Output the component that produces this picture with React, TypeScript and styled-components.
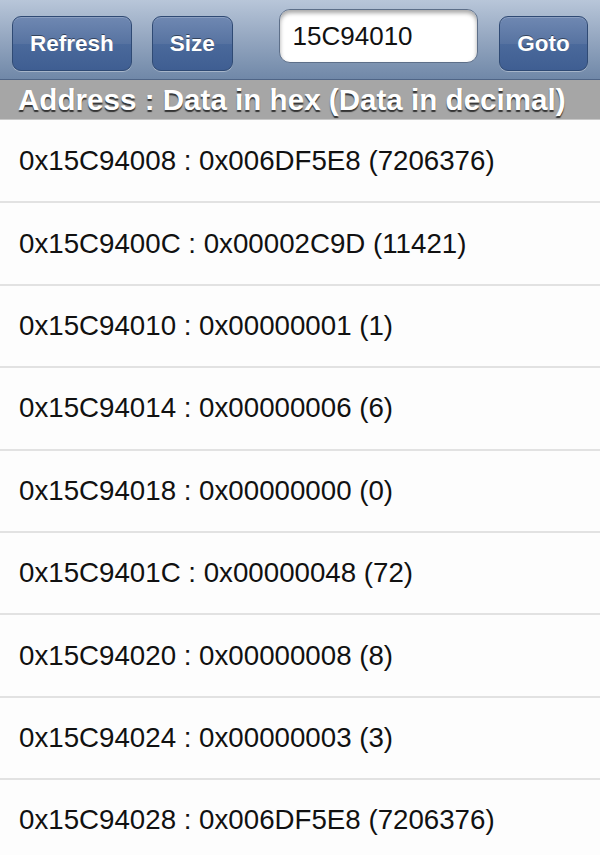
import React from "react";
import styled, { createGlobalStyle } from "styled-components";

const Global = createGlobalStyle`
  html, body { margin: 0; padding: 0; background: #fdfdfd; }
  body { font-family: "Liberation Sans", Arial, sans-serif; }
`;

const Page = styled.div`
  width: 600px;
  height: 855px;
  overflow: hidden;
  background: #fdfdfd;
  display: flex;
  flex-direction: column;
  & > * { flex-shrink: 0; }
`;

const Toolbar = styled.div`
  height: 80px;
  box-sizing: border-box;
  display: flex;
  align-items: flex-start;
  padding: 0 12px 0 12px;
  background: linear-gradient(#b8c6d9 0%, #97a9c2 45%, #7088a8 100%);
  border-bottom: 1px solid #4f6586;
`;

const Button = styled.button<{ $w: number; $ml: number }>`
  width: ${(p) => p.$w}px;
  margin-left: ${(p) => p.$ml}px;
  margin-top: 16px;
  height: 55px;
  border-radius: 9px;
  border: 1px solid #2f4a74;
  background: linear-gradient(#6f88b2 0%, #5773a1 50%, #4a699b 52%, #3f5e92 100%);
  box-shadow: inset 0 1px 0 rgba(255, 255, 255, 0.2), 0 1px 0 rgba(255, 255, 255, 0.35);
  color: #fff;
  font-family: "Liberation Sans", Arial, sans-serif;
  font-weight: bold;
  font-size: 22.5px;
  text-shadow: 0 -1px 0 rgba(0, 0, 0, 0.45);
  padding: 0;
  display: flex;
  align-items: center;
  justify-content: center;
`;

const Field = styled.div`
  width: 200px;
  height: 54px;
  margin-left: 46px;
  margin-top: 9px;
  box-sizing: border-box;
  border-radius: 11px;
  background: #fff;
  border: 1px solid #5d6f89;
  box-shadow: inset 0 3px 4px rgba(0, 0, 0, 0.35);
  display: flex;
  align-items: center;
  padding-left: 13px;
  font-size: 26px;
  color: #111;
`;

const Header = styled.div`
  height: 40px;
  box-sizing: border-box;
  background: #a6a6a6;
  display: flex;
  align-items: center;
  padding-left: 18px;
  font-weight: bold;
  font-size: 29.6px;
  color: #fff;
  white-space: nowrap;
  text-shadow: 0 2px 1px rgba(40, 40, 40, 0.9);
  border-bottom: 1px solid #c8c8c8;
`;

const List = styled.div`
  display: flex;
  flex-direction: column;
  padding-top: 1px;
`;

const Row = styled.div`
  height: 82.4px;
  flex-shrink: 0;
  box-sizing: border-box;
  border-bottom: 2px solid #e2e2e2;
  display: flex;
  align-items: center;
  padding-left: 19px;
  font-size: 27.7px;
  color: #111;
  white-space: nowrap;
`;

const rows = [
  "0x15C94008 : 0x006DF5E8 (7206376)",
  "0x15C9400C : 0x00002C9D (11421)",
  "0x15C94010 : 0x00000001 (1)",
  "0x15C94014 : 0x00000006 (6)",
  "0x15C94018 : 0x00000000 (0)",
  "0x15C9401C : 0x00000048 (72)",
  "0x15C94020 : 0x00000008 (8)",
  "0x15C94024 : 0x00000003 (3)",
  "0x15C94028 : 0x006DF5E8 (7206376)",
];

export default function App() {
  return (
    <Page>
      <Global />
      <Toolbar>
        <Button $w={120} $ml={0}>Refresh</Button>
        <Button $w={81} $ml={20}>Size</Button>
        <Field>15C94010</Field>
        <Button $w={89} $ml={21}>Goto</Button>
      </Toolbar>
      <Header>Address : Data in hex (Data in decimal)</Header>
      <List>
        {rows.map((r) => (
          <Row key={r}>{r}</Row>
        ))}
      </List>
    </Page>
  );
}
